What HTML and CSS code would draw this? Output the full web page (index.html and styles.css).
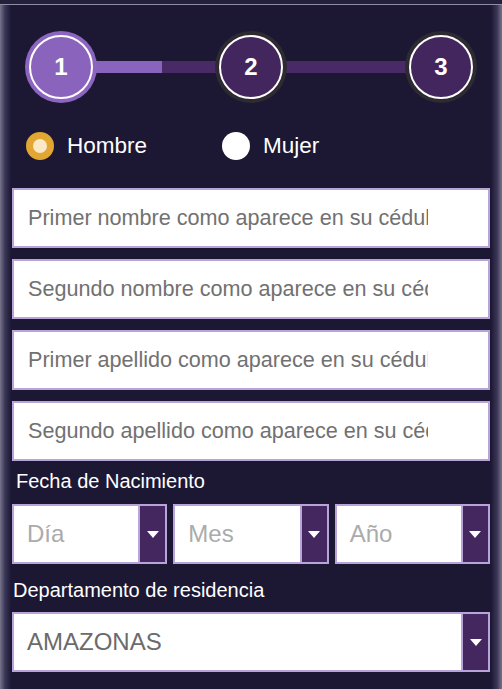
FILE: index.html
```html
<!DOCTYPE html>
<html lang="es">
<head>
    <meta charset="UTF-8">
    <meta name="viewport" content="width=device-width, initial-scale=1.0">
    <title>Registro</title>
    <link rel="stylesheet" href="styles.css">
</head>
<body>
    <div class="frame">
        <div class="container">
            <div class="stepper">
                <div class="step active"><span>1</span></div>
                <div class="track first"></div>
                <div class="step"><span>2</span></div>
                <div class="track"></div>
                <div class="step"><span>3</span></div>
            </div>

            <div class="gender">
                <label class="radio checked"><span class="dot"></span>Hombre</label>
                <label class="radio"><span class="dot"></span>Mujer</label>
            </div>

            <div class="fields">
                <div class="field"><span class="ph">Primer nombre como aparece en su cédula</span></div>
                <div class="field"><span class="ph">Segundo nombre como aparece en su cédula</span></div>
                <div class="field"><span class="ph">Primer apellido como aparece en su cédula</span></div>
                <div class="field"><span class="ph">Segundo apellido como aparece en su cédula</span></div>
            </div>

            <div class="label birth">Fecha de Nacimiento</div>
            <div class="dates">
                <div class="select"><span class="value muted">Día</span><span class="arrow"></span></div>
                <div class="select"><span class="value muted">Mes</span><span class="arrow"></span></div>
                <div class="select"><span class="value muted">Año</span><span class="arrow"></span></div>
            </div>

            <div class="label dept">Departamento de residencia</div>
            <div class="select wide"><span class="value">AMAZONAS</span><span class="arrow"></span></div>
        </div>
    </div>
</body>
</html>
```

FILE: styles.css
```css
* {
    margin: 0;
    padding: 0;
    box-sizing: border-box;
}

body {
    font-family: 'Liberation Sans', Arial, sans-serif;
    background: #23203c;
    min-height: 100vh;
    color: #fff;
}

.frame {
    margin-top: 4px;
    min-height: 685px;
    border-top: 1px solid #8f8ca3;
    background: linear-gradient(to right, #76748a 0px, #3a3656 5px, #1c1834 11px, #1c1834 491px, #3a3656 497px, #76748a 502px);
}

.container {
    padding: 0 12px 0 12px;
}

/* steps */
.stepper {
    display: flex;
    align-items: center;
    padding: 26px 13px 0 13px;
}

.step {
    width: 72px;
    height: 72px;
    border-radius: 50%;
    background: #2d2a31;
    display: flex;
    align-items: center;
    justify-content: center;
    position: relative;
    z-index: 1;
    flex-shrink: 0;
}

.step span {
    width: 64px;
    height: 64px;
    border-radius: 50%;
    border: 2px solid #fff;
    background: #44265e;
    display: flex;
    align-items: center;
    justify-content: center;
    font-size: 24px;
    font-weight: bold;
}

.step.active {
    background: #8c65c1;
}

.step.active span {
    background: #8a63bd;
}

.track {
    flex: 1;
    height: 12px;
    margin: 0 -4px;
    background: #4a2a66;
}

.track.first {
    background: linear-gradient(to right, #8a63bd 55%, #4a2a66 55%);
}

/* radios */
.gender {
    display: flex;
    gap: 75px;
    padding: 29px 0 0 14px;
}

.radio {
    display: flex;
    align-items: center;
    gap: 13px;
    font-size: 22.5px;
    line-height: 28px;
}

.dot {
    width: 28px;
    height: 28px;
    border-radius: 50%;
    background: #fff;
}

.radio.checked .dot {
    background: #fbe8c6;
    border: 7px solid #e2a633;
}

/* inputs */
.fields {
    display: flex;
    flex-direction: column;
    gap: 11px;
    margin-top: 28px;
}

.field {
    height: 60px;
    background: #fff;
    border: 2px solid #b9a4d9;
    padding: 0 60px 0 14px;
    display: flex;
    align-items: center;
    font-size: 21.6px;
    color: #717171;
}

.ph {
    display: block;
    flex: 1;
    white-space: nowrap;
    overflow: hidden;
}

.label {
    font-size: 20px;
    line-height: 22px;
}

.label.birth {
    padding: 9px 0 0 4px;
    height: 43px;
}

.label.dept {
    padding: 15px 0 0 1px;
    height: 48px;
}

/* selects */
.dates {
    display: grid;
    grid-template-columns: 1fr 1fr 1fr;
    gap: 6px;
}

.select {
    height: 60px;
    background: #fff;
    border: 2px solid #b9a4d9;
    display: flex;
    align-items: stretch;
}

.select .value {
    flex: 1;
    display: flex;
    align-items: center;
    padding-left: 13px;
    font-size: 24px;
    color: #6b6b6b;
}

.select .value.muted {
    color: #ababab;
}

.arrow {
    width: 27px;
    background: #45275f;
    border-left: 2px solid #b9a4d9;
    display: flex;
    align-items: center;
    justify-content: center;
}

.arrow::after {
    content: "";
    border-left: 6px solid transparent;
    border-right: 6px solid transparent;
    border-top: 7px solid #fff;
}
```
